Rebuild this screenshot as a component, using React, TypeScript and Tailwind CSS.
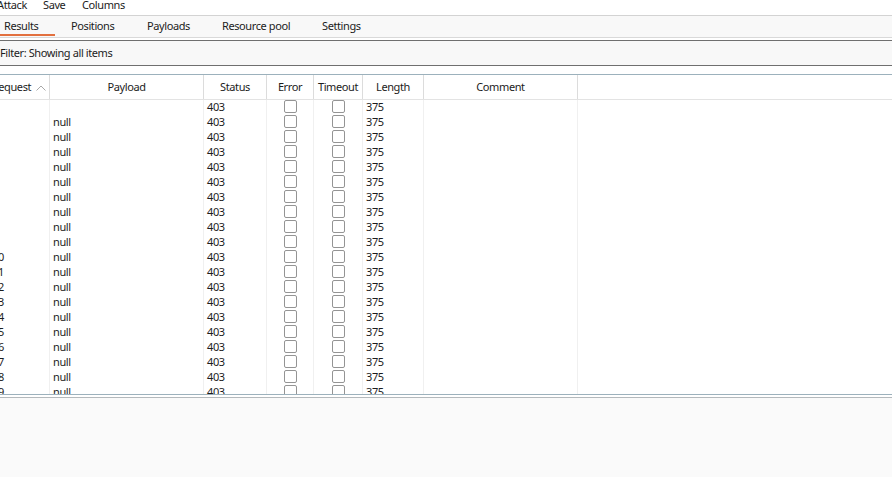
import React from "react";

const columns = [
  { key: "request", label: "Request", width: "w-[61px]" },
  { key: "payload", label: "Payload", width: "w-[154px]" },
  { key: "status", label: "Status", width: "w-[63px]" },
  { key: "error", label: "Error", width: "w-[47px]" },
  { key: "timeout", label: "Timeout", width: "w-[49px]" },
  { key: "length", label: "Length", width: "w-[61px]" },
  { key: "comment", label: "Comment", width: "w-[154px]" },
];

const tabs = [
  { label: "Results", width: "w-[67px]", active: true },
  { label: "Positions", width: "w-[76px]" },
  { label: "Payloads", width: "w-[75px]" },
  { label: "Resource pool", width: "w-[100px]" },
  { label: "Settings", width: "w-[90px]" },
];

const rows = Array.from({ length: 21 }, (_, i) => ({
  request: i,
  payload: i === 0 ? "" : "null",
  status: 403,
  length: 375,
}));

function Checkbox() {
  return (
    <div className="h-[13px] w-[13px] rounded-[2px] border border-[#949494] bg-white" />
  );
}

function SortUp() {
  return (
    <svg width="10" height="6" viewBox="0 0 10 6" className="mt-[1px]">
      <path d="M0.5 5.5 L5 1 L9.5 5.5" fill="none" stroke="#a8a8a8" strokeWidth="1" />
    </svg>
  );
}

export default function App() {
  return (
    <div className="flex h-[477px] w-[892px] flex-col overflow-hidden bg-white font-['Noto_Sans',sans-serif] text-[11px] tracking-[-0.4px] text-[#1c1c1c]">
      {/* menu */}
      <div className="flex h-[15px] shrink-0 items-start">
        <span className="ml-[-3px] w-[46px] leading-[9px]">Attack</span>
        <span className="w-[39px] leading-[9px]">Save</span>
        <span className="leading-[9px]">Columns</span>
      </div>
      <div className="h-px shrink-0 bg-[#d3d3d3]" />

      {/* tabs */}
      <div className="flex h-[21px] shrink-0 bg-[#f8f8f8]">
        {tabs.map((t) => (
          <div key={t.label} className={`${t.width} flex flex-col`}>
            <span className="h-[18px] pl-[4px] pt-[1px] leading-[18px]">{t.label}</span>
            {t.active && <div className="h-[2px] w-[55px] bg-[#e2703f]" />}
          </div>
        ))}
      </div>
      <div className="h-px shrink-0 bg-[#d9d9d9]" />
      <div className="h-[2px] shrink-0 bg-white" />

      {/* filter */}
      <div className="h-[26px] shrink-0 border-y border-[#6f6f6f] bg-[#f8f8f8]">
        <span className="block leading-[24px]">Filter: Showing all items</span>
      </div>
      <div className="h-[8px] shrink-0 bg-white" />

      {/* table */}
      <div className="h-[321px] shrink-0 overflow-hidden border-y border-[#9cb1bc]">
        <div className="ml-[-11px] flex flex-col">
          <div className="flex h-[25px] border-b border-[#e3e3e3]">
            {columns.map((c) => (
              <div
                key={c.key}
                className={`${c.width} flex shrink-0 items-center justify-center gap-[5px] border-r border-[#dcdcdc] leading-[24px]`}
              >
                <span>{c.label}</span>
                {c.key === "request" && <SortUp />}
              </div>
            ))}
            <div className="flex-1" />
          </div>
          {rows.map((r) => (
            <div key={r.request} className="flex h-[15px] leading-[13px]">
              <div className="w-[61px] shrink-0 border-r border-[#f0f0f0] pl-[3px]">{r.request}</div>
              <div className="w-[154px] shrink-0 border-r border-[#f0f0f0] pl-[3px]">{r.payload}</div>
              <div className="w-[63px] shrink-0 border-r border-[#f0f0f0] pl-[3px]">{r.status}</div>
              <div className="flex w-[47px] shrink-0 items-start justify-center border-r border-[#f0f0f0] pl-[1px]">
                <Checkbox />
              </div>
              <div className="flex w-[49px] shrink-0 items-start justify-center border-r border-[#f0f0f0]">
                <Checkbox />
              </div>
              <div className="w-[61px] shrink-0 border-r border-[#f0f0f0] pl-[3px]">{r.length}</div>
              <div className="w-[154px] shrink-0 border-r border-[#f0f0f0]" />
              <div className="flex-1" />
            </div>
          ))}
        </div>
      </div>
      <div className="h-[2px] shrink-0 bg-white" />
      <div className="flex-1 border-t border-[#b4b9bc] bg-[#fafafa]" />
    </div>
  );
}
